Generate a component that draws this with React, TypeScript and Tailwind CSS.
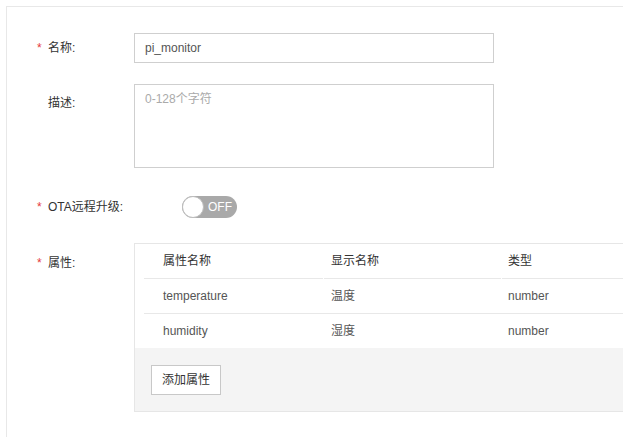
import React from "react";

const font = { fontFamily: '"Liberation Sans", "Noto Sans CJK SC", sans-serif' };

function Label({ text, required }: { text: string; required?: boolean }) {
  return (
    <div className="w-[97px] shrink-0 flex items-center h-[30px] text-[12px] text-[#333]">
      <span className="w-[11px] text-[#e5393b] text-[12px] leading-none">{required ? "*" : ""}</span>
      <span>{text}</span>
    </div>
  );
}

const rows = [
  { name: "temperature", display: "温度", type: "number" },
  { name: "humidity", display: "湿度", type: "number" },
];

export default function App() {
  return (
    <div className="w-[623px] h-[437px] overflow-hidden bg-white" style={font}>
      <div className="ml-[6px] mt-[6px] border-l border-t border-[#e8e8e8] h-[440px] w-[640px] pl-[30px] pt-[26px]">
        {/* name */}
        <div className="flex">
          <Label text="名称:" required />
          <div className="w-[360px] h-[30px] border border-[#cfcfcf] px-[10px] flex items-center text-[12px] text-[#555]">
            pi_monitor
          </div>
        </div>

        {/* description */}
        <div className="flex mt-[21px]">
          <div className="pt-[4px]">
            <Label text="描述:" />
          </div>
          <div className="w-[360px] h-[84px] border border-[#cfcfcf] px-[10px] pt-[5px] text-[12px] text-[#aaa]">
            0-128个字符
          </div>
        </div>

        {/* OTA */}
        <div className="flex mt-[28px] items-center">
          <div className="w-[145px] shrink-0 flex items-center h-[22px] text-[12px] text-[#333]">
            <span className="w-[11px] text-[#e5393b] leading-none">*</span>
            <span>OTA远程升级:</span>
          </div>
          <div className="relative w-[55px] h-[22px] rounded-full bg-[#a9a9a9] flex items-center">
            <div className="w-[22px] h-[22px] rounded-full bg-white border border-[#bdbdbd]" />
            <span className="ml-[4px] text-[12px] text-white">OFF</span>
          </div>
        </div>

        {/* attributes */}
        <div className="flex mt-[25px]">
          <div className="pt-[5px]">
            <Label text="属性:" required />
          </div>
          <div className="w-[520px] border border-[#e6e6e6]">
            <div className="bg-white px-[9px] text-[12px]">
              <div className="flex h-[35px] items-center text-[#333]">
                <div className="w-[179px] pl-[19px] h-full flex items-center border-b border-[#e8e8e8] mr-[1px]">属性名称</div>
                <div className="w-[177px] pl-[7px] h-full flex items-center border-b border-[#e8e8e8] mr-[1px]">显示名称</div>
                <div className="flex-1 pl-[6px] h-full flex items-center border-b border-[#e8e8e8]">类型</div>
              </div>
              <div className="flex h-[35px] items-center text-[#555] border-b border-[#e8e8e8]">
                <div className="w-[180px] pl-[19px]">{rows[0].name}</div>
                <div className="w-[178px] pl-[7px]">{rows[0].display}</div>
                <div className="flex-1 pl-[6px]">{rows[0].type}</div>
              </div>
              <div className="flex h-[34px] items-center text-[#555]">
                <div className="w-[180px] pl-[19px]">{rows[1].name}</div>
                <div className="w-[178px] pl-[7px]">{rows[1].display}</div>
                <div className="flex-1 pl-[6px]">{rows[1].type}</div>
              </div>
            </div>
            <div className="bg-[#f4f4f4] h-[63px] pl-[16px] pt-[17px]">
              <button className="w-[70px] h-[30px] bg-white border border-[#c8c8c8] text-[12px] text-[#333]">
                添加属性
              </button>
            </div>
          </div>
        </div>
      </div>
    </div>
  );
}
